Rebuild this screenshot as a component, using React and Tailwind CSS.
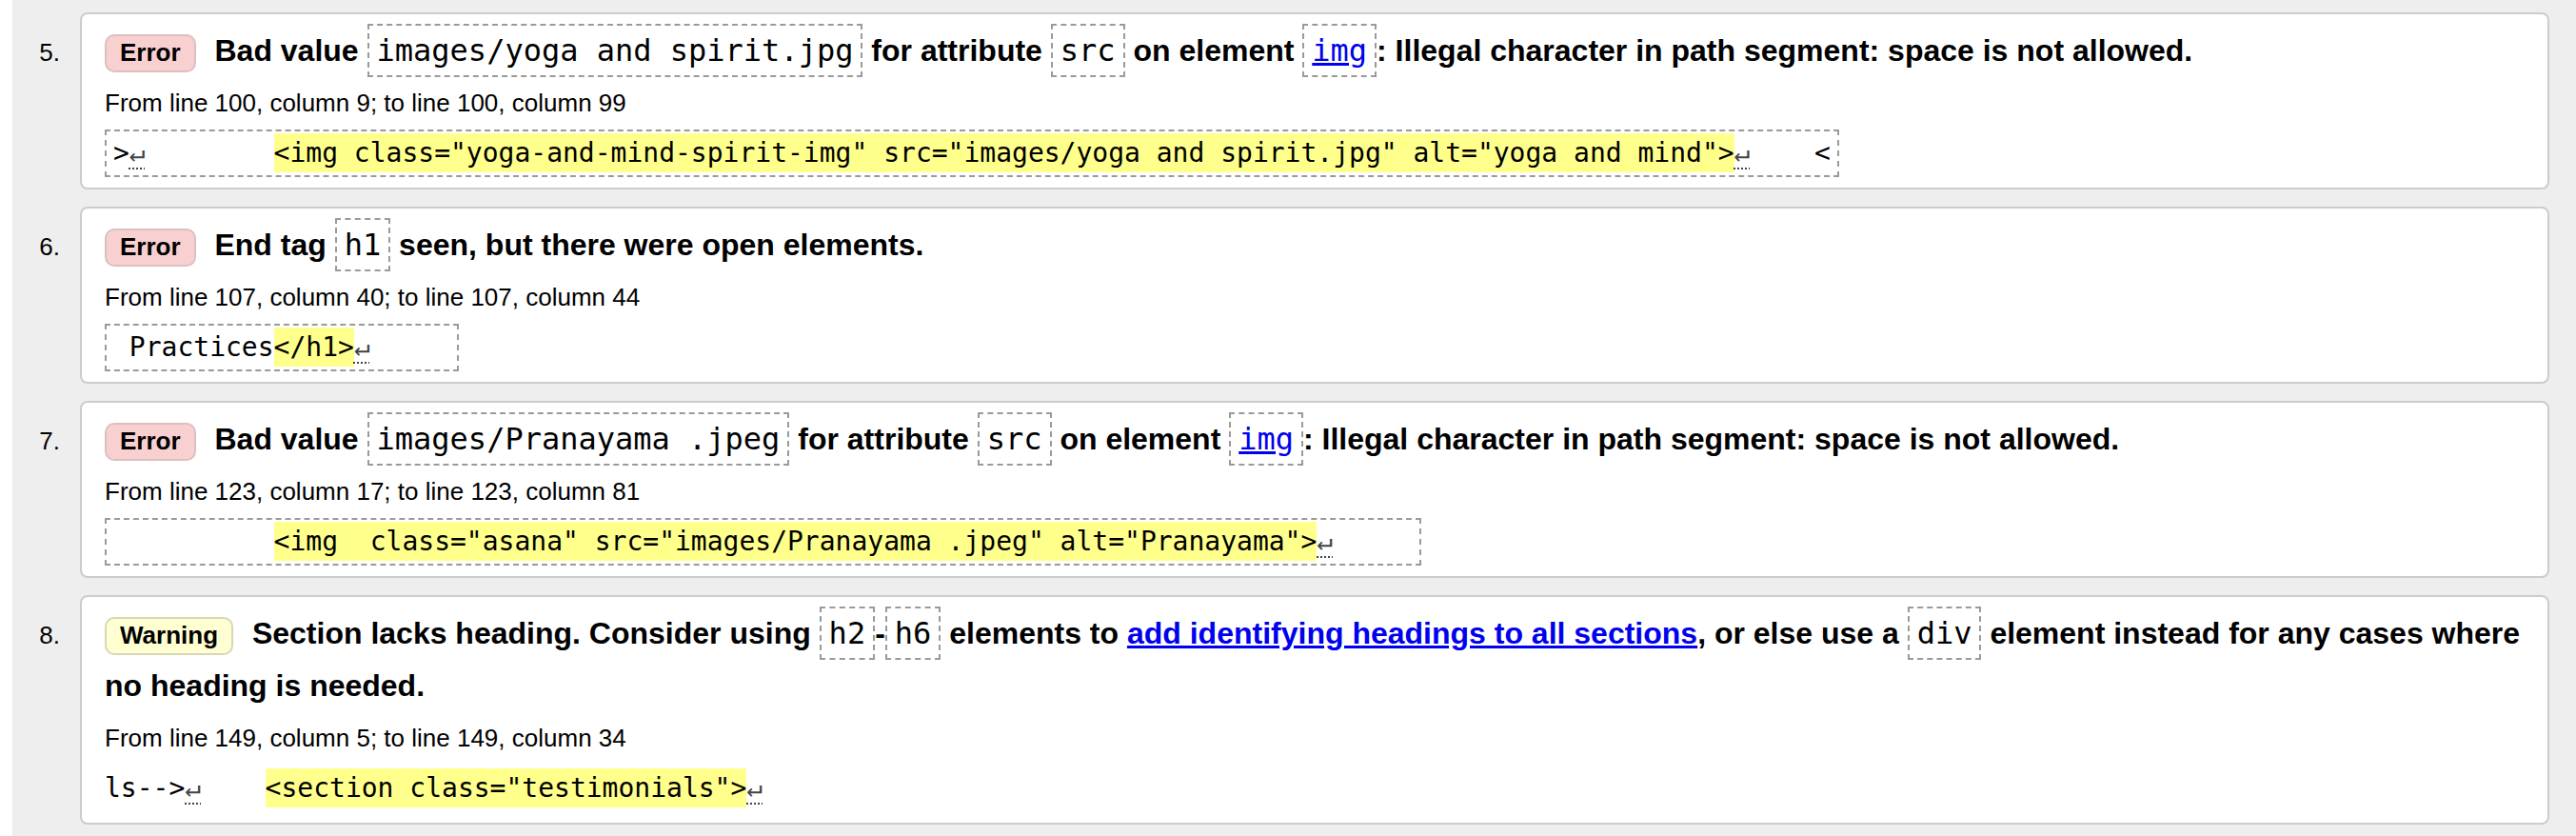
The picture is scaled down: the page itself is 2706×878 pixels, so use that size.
import React from 'react';

// Validator message list: numbered cards with badge, location and code excerpt
const Code = ({ children }) => (
  <code className="border-2 border-dashed border-[#9a9a9a] px-[8px] py-[7px] font-['DejaVu_Sans_Mono',monospace] text-[32px] font-normal text-black">
    {children}
  </code>
);

const Badge = ({ kind }) =>
  kind === 'error' ? (
    <span className="mr-[11px] inline-block rounded-[10px] border-2 border-[#dcc0c0] bg-[#f8d0d0] px-[14px] pt-[3px] pb-[4px] text-[26px] leading-[29px] font-bold">
      Error
    </span>
  ) : (
    <span className="mr-[11px] inline-block rounded-[10px] border-2 border-[#d8d6b6] bg-[#ffffd2] px-[14px] pt-[3px] pb-[4px] text-[26px] leading-[29px] font-bold">
      Warning
    </span>
  );

const Lf = () => (
  <span className="text-[#444] underline decoration-dotted decoration-[1.5px] underline-offset-[6px]">↵</span>
);

const Hl = ({ children }) => <span className="bg-[#ffff8c] py-[4px]">{children}</span>;

const Message = ({ n, kind, title, location, code, boxed = true }) => (
  <li className="flex items-baseline">
    <span className="w-[71px] shrink-0 pr-[21px] text-right text-[26px]">{n}.</span>
    <div className="h-fit flex-1 rounded-[8px] border-2 border-[#cccccc] bg-white pt-[11px] pr-[8px] pb-[11px] pl-[24px]">
      <p className="text-[32px] font-bold leading-[55px]">
        <Badge kind={kind} /> {title}
      </p>
      <p className="mt-[11px] text-[26px] leading-[32px]">{location}</p>
      {boxed ? (
        <div className="mt-[12px] w-fit whitespace-pre border-2 border-dashed border-[#9a9a9a] px-[7px] py-[5px] font-['DejaVu_Sans_Mono',monospace] text-[28px] leading-[36px]">
          {code}
        </div>
      ) : (
        <div className="mt-[12px] w-fit whitespace-pre border-y-2 border-transparent py-[5px] font-['DejaVu_Sans_Mono',monospace] text-[28px] leading-[36px]">
          {code}
        </div>
      )}
    </div>
  </li>
);

export default function App() {
  return (
    <div className="flex min-h-[878px] bg-white pl-[13px] font-['Liberation_Sans',Arial,Helvetica,sans-serif] text-black">
      <ol className="flex flex-1 flex-col gap-[18px] bg-[#eeeeee] pt-[13px] pr-[28px] pb-[11px]">
        <Message
          n={5}
          kind="error"
          title={
            <>
              Bad value <Code>images/yoga and spirit.jpg</Code> for attribute <Code>src</Code> on element{' '}
              <Code>
                <a href="#" className="text-[#0000ee] underline">img</a>
              </Code>
              : Illegal character in path segment: space is not allowed.
            </>
          }
          location="From line 100, column 9; to line 100, column 99"
          code={
            <>
              {'>'}
              <Lf />
              {'        '}
              <Hl>{'<img class="yoga-and-mind-spirit-img" src="images/yoga and spirit.jpg" alt="yoga and mind">'}</Hl>
              <Lf />
              {'    <'}
            </>
          }
        />
        <Message
          n={6}
          kind="error"
          title={
            <>
              End tag <Code>h1</Code> seen, but there were open elements.
            </>
          }
          location="From line 107, column 40; to line 107, column 44"
          code={
            <>
              {' Practices'}
              <Hl>{'</h1>'}</Hl>
              <Lf />
              {'     '}
            </>
          }
        />
        <Message
          n={7}
          kind="error"
          title={
            <>
              Bad value <Code>images/Pranayama .jpeg</Code> for attribute <Code>src</Code> on element{' '}
              <Code>
                <a href="#" className="text-[#0000ee] underline">img</a>
              </Code>
              : Illegal character in path segment: space is not allowed.
            </>
          }
          location="From line 123, column 17; to line 123, column 81"
          code={
            <>
              {'          '}
              <Hl>{'<img  class="asana" src="images/Pranayama .jpeg" alt="Pranayama">'}</Hl>
              <Lf />
              {'     '}
            </>
          }
        />
        <Message
          n={8}
          kind="warning"
          boxed={false}
          title={
            <>
              Section lacks heading. Consider using <Code>h2</Code>-<Code>h6</Code> elements to{' '}
              <a href="#" className="text-[#0000ee] underline">add identifying headings to all sections</a>, or else use a{' '}
              <Code>div</Code> element instead for any cases where
              <br />
              no heading is needed.
            </>
          }
          location="From line 149, column 5; to line 149, column 34"
          code={
            <>
              {'ls-->'}
              <Lf />
              {'    '}
              <Hl>{'<section class="testimonials">'}</Hl>
              <Lf />
            </>
          }
        />
      </ol>
    </div>
  );
}
